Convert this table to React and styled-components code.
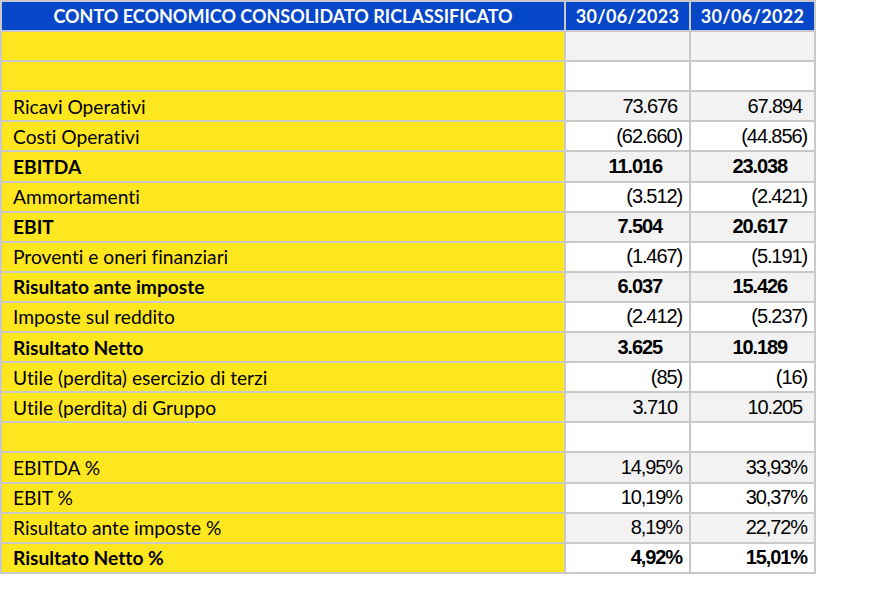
import React from "react";
import styled, { createGlobalStyle } from "styled-components";

const rows = [
  { label: "" },
  { label: "" },
  { label: "Ricavi Operativi", a: "73.676", b: "67.894" },
  { label: "Costi Operativi", a: "(62.660)", b: "(44.856)" },
  { label: "EBITDA", a: "11.016", b: "23.038", bold: true },
  { label: "Ammortamenti", a: "(3.512)", b: "(2.421)" },
  { label: "EBIT", a: "7.504", b: "20.617", bold: true },
  { label: "Proventi e oneri finanziari", a: "(1.467)", b: "(5.191)" },
  { label: "Risultato ante imposte", a: "6.037", b: "15.426", bold: true },
  { label: "Imposte sul reddito", a: "(2.412)", b: "(5.237)" },
  { label: "Risultato Netto", a: "3.625", b: "10.189", bold: true },
  { label: "Utile (perdita) esercizio di terzi", a: "(85)", b: "(16)" },
  { label: "Utile (perdita) di Gruppo", a: "3.710", b: "10.205" },
  { label: "" },
  { label: "EBITDA %", a: "14,95%", b: "33,93%" },
  { label: "EBIT %", a: "10,19%", b: "30,37%" },
  { label: "Risultato ante imposte %", a: "8,19%", b: "22,72%" },
  { label: "Risultato Netto %", a: "4,92%", b: "15,01%", bold: true },
];

// accounting-style alignment: plain numbers leave room for the ")"
function valuePad(value, bold) {
  if (!value) return 0;
  if (value.endsWith(")") || value.endsWith("%")) return 7;
  return bold ? 27 : 12;
}

function App() {
  return (
    <>
      <GlobalStyle />
      <Sheet>
        <TitleCell>CONTO ECONOMICO CONSOLIDATO RICLASSIFICATO</TitleCell>
        <DateCell>30/06/2023</DateCell>
        <DateCell>30/06/2022</DateCell>
        {rows.map((row, i) => (
          <React.Fragment key={i}>
            <LabelCell $bold={row.bold}>{row.label}</LabelCell>
            <ValueCell $bold={row.bold} $shade={i % 2 === 0} $pad={valuePad(row.a, row.bold)}>
              {row.a}
            </ValueCell>
            <ValueCell $bold={row.bold} $shade={i % 2 === 0} $pad={valuePad(row.b, row.bold)}>
              {row.b}
            </ValueCell>
          </React.Fragment>
        ))}
      </Sheet>
    </>
  );
}

const GlobalStyle = createGlobalStyle`
  html, body {
    margin: 0;
    background: #ffffff;
  }
`;

const Sheet = styled.div`
  display: grid;
  grid-template-columns: 562px 123px 123px;
  grid-auto-rows: 28.1px;
  gap: 2px;
  padding: 2px;
  width: max-content;
  background: #c9c9c9;
`;

const HeadCell = styled.div`
  display: flex;
  align-items: center;
  justify-content: center;
  background: #0646c9;
  color: #ffffff;
  font-family: Lato, "Open Sans", sans-serif;
  font-weight: 700;
  font-size: 18px;
`;

const TitleCell = styled(HeadCell)`
  letter-spacing: 0;
`;

const DateCell = styled(HeadCell)`
  letter-spacing: 0.3px;
`;

const LabelCell = styled.div`
  display: flex;
  align-items: center;
  padding-left: 11px;
  background: #ffe720;
  color: #000000;
  font-family: Lato, "Open Sans", sans-serif;
  font-size: 19.2px;
  font-variant-ligatures: none;
  font-weight: ${(p) => (p.$bold ? 700 : 400)};
  white-space: nowrap;
`;

const ValueCell = styled.div`
  display: flex;
  align-items: center;
  justify-content: flex-end;
  padding-right: ${(p) => p.$pad}px;
  background: ${(p) => (p.$shade ? "#f2f2f2" : "#ffffff")};
  color: #000000;
  font-family: "Liberation Sans", Arial, sans-serif;
  font-size: 20px;
  letter-spacing: -1.1px;
  font-weight: ${(p) => (p.$bold ? 700 : 400)};
`;

export default App;
